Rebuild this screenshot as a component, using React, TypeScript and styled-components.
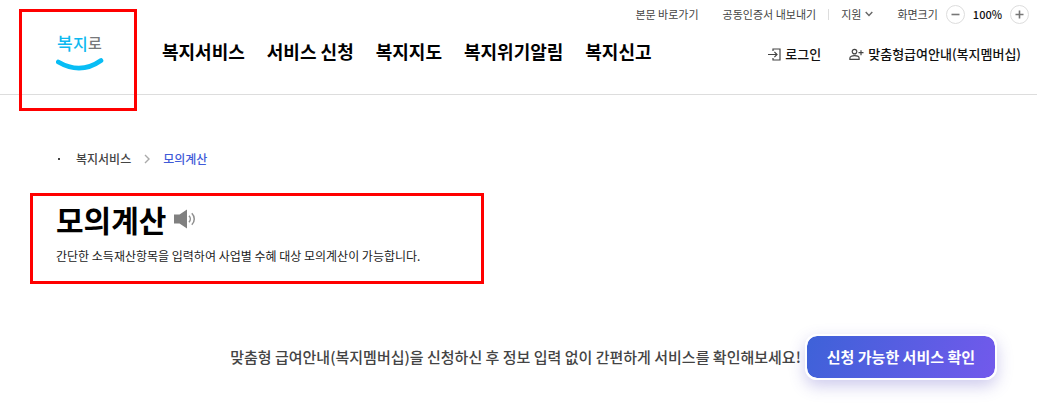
import React from "react";
import styled, { createGlobalStyle } from "styled-components";

const GlobalStyle = createGlobalStyle`
  *, *::before, *::after { box-sizing: border-box; }
  body {
    margin: 0;
    background: #fff;
    color: #222;
    font-family: "Noto Sans CJK KR", "Noto Sans", sans-serif;
    font-size: 12px;
    line-height: 20px;
  }
  a { color: inherit; text-decoration: none; }
  button { font: inherit; cursor: pointer; }
  svg { display: block; flex: none; }
`;

const Header = styled.header`
  padding: 4px 8px 22px 56px;
  border-bottom: 1px solid #ddd;
`;

const HeaderRow = styled.div`
  display: flex;
  align-items: flex-start;
  padding: 6px 8px 0 0;
`;

const LogoLink = styled.a`
  position: relative;
`;

const LogoMark = styled.span`
  position: absolute;
  top: -21px;
  left: -37px;
  width: 118px;
  height: 102px;
  border: 3px solid #f00;
  pointer-events: none;
`;

const MainNav = styled.nav`
  flex: 1;
  padding: 8px 0 0 58px;
`;

const NavList = styled.ul`
  display: flex;
  gap: 22px;
  margin: 0;
  padding: 0;
  list-style: none;
`;

const NavLink = styled.a`
  color: #000;
  font-size: 18px;
  font-weight: 700;
  line-height: 26px;
  white-space: nowrap;
`;

const UtilityBar = styled.div`
  display: flex;
  align-items: center;
  justify-content: flex-end;
  color: #444;
  font-size: 11px;
  white-space: nowrap;
`;

const UtilityLink = styled.a`
  margin-right: 24px;
`;

const SupportButton = styled.button`
  display: flex;
  align-items: center;
  gap: 4px;
  margin: 0 24px 0 12px;
  padding: 0;
  border: 0;
  background: none;
  color: inherit;
`;

const Divider = styled.span`
  width: 1px;
  height: 11px;
  margin-left: 12px;
  background: #ddd;
`;

const ZoomControl = styled.div`
  display: flex;
  align-items: center;
  gap: 8px;
`;

const ZoomButton = styled.button`
  display: grid;
  place-items: center;
  width: 19px;
  height: 19px;
  padding: 0;
  border: 1px solid #ddd;
  border-radius: 50%;
  background: #fff;
  color: #777;
`;

const ZoomValue = styled.output`
  color: #111;
  font-weight: 500;
`;

const AccountBar = styled.div`
  display: flex;
  gap: 28px;
  padding-top: 14px;
`;

const AccountLink = styled.a`
  display: flex;
  align-items: center;
  gap: 4px;
  color: #111;
  font-size: 13px;
  font-weight: 500;
  white-space: nowrap;
`;

const Content = styled.main`
  padding: 54px 40px 32px 30px;
`;

const Breadcrumb = styled.ol`
  display: flex;
  align-items: center;
  gap: 13px;
  margin: 0;
  padding: 0 26px;
  list-style: none;
  color: #444;
  font-weight: 500;
`;

const HomeDot = styled.li`
  width: 2px;
  height: 2px;
  margin: 0 3px 0 2px;
  background: #444;
`;

const Crumb = styled.a<{ $current?: boolean }>`
  color: ${(p) => (p.$current ? "#3f5bd8" : "inherit")};
`;

const TitleBox = styled.section`
  max-width: 454px;
  margin-top: 24px;
  padding: 4px 23px 15px;
  border: 3px solid #f00;
`;

const TitleRow = styled.div`
  display: flex;
  align-items: center;
  gap: 8px;
`;

const Title = styled.h1`
  margin: 0;
  color: #000;
  font-size: 30px;
  font-weight: 700;
  line-height: 38px;
`;

const SoundButton = styled.button`
  padding: 0;
  border: 0;
  background: none;
`;

const Description = styled.p`
  margin: 8px 0 0;
  color: #222;
`;

const Promo = styled.section`
  display: flex;
  align-items: center;
  justify-content: flex-end;
  gap: 4px;
  margin-top: 50px;
`;

const PromoText = styled.p`
  margin: 0;
  color: #444;
  font-size: 15px;
  font-weight: 500;
  white-space: nowrap;
`;

const PromoButton = styled.button`
  padding: 11px 20px;
  border: 2px solid #fff;
  border-radius: 12px;
  background: linear-gradient(110deg, #3d62d8, #7359ec) border-box;
  background-clip: padding-box;
  box-shadow: 0 6px 16px rgba(80, 70, 190, 0.28);
  color: #fff;
  font-size: 15px;
  font-weight: 700;
  white-space: nowrap;
`;

const Logo = () => (
  <svg width="48" height="42" viewBox="0 0 48 42" role="img" aria-label="복지로">
    <g fontFamily='"Noto Sans CJK KR", sans-serif' fontWeight="500">
      <text x="1" y="20" fontSize="17" fill="#0cb9f0">복</text>
      <text x="17" y="20" fontSize="16" fill="#0cb9f0">지</text>
      <text x="32" y="19" fontSize="15" fill="#77787b">로</text>
    </g>
    <path d="M2.3 32 Q24.5 45 45 30.5" fill="none" stroke="#08bdf5" strokeWidth="4.6" strokeLinecap="round" />
  </svg>
);

const ChevronDown = () => (
  <svg width="8" height="6" viewBox="0 0 8 6" fill="none" stroke="#666" strokeWidth="1.4" aria-hidden="true">
    <path d="M.7 1 4 4.4 7.3 1" />
  </svg>
);

const ChevronRight = () => (
  <svg width="6" height="10" viewBox="0 0 6 10" fill="none" stroke="#aaa" strokeWidth="1.4" aria-hidden="true">
    <path d="M1 1l4 4-4 4" />
  </svg>
);

const LoginIcon = () => (
  <svg width="13" height="13" viewBox="0 0 13 13" fill="none" stroke="#444" strokeWidth="1.2" aria-hidden="true">
    <path d="M5 3V1h7v11H5v-2M0 6.5h9M6.4 3.9 9 6.5 6.4 9.1" />
  </svg>
);

const MemberIcon = () => (
  <svg width="15" height="13" viewBox="0 0 15 13" fill="none" stroke="#444" strokeWidth="1.2" aria-hidden="true">
    <circle cx="5.5" cy="3.6" r="2.3" />
    <path d="M.9 11.4V10c0-1.5 2.2-2.4 4.6-2.4s4.6.9 4.6 2.4v1.4zM12 2.2v5M9.5 4.7h5" />
  </svg>
);

const SoundIcon = () => (
  <svg width="22" height="20" viewBox="0 0 22 20" aria-hidden="true">
    <path d="M0 5.5h5.5L13 .6v18.8l-7.5-4.9H0z" fill="#808080" />
    <path d="M15 6.8c1.7 1.8 1.7 4.6 0 6.4M17.8 4.2c3.3 3.4 3.3 8.2 0 11.6" fill="none" stroke="#909090" strokeWidth="1.5" />
  </svg>
);

const PlusMinus = ({ plus }: { plus?: boolean }) => (
  <svg width="9" height="9" viewBox="0 0 9 9" stroke="currentColor" strokeWidth="1.6" aria-hidden="true">
    <path d={plus ? "M.5 4.5h8M4.5.5v8" : "M.5 4.5h8"} />
  </svg>
);

const menu = ["복지서비스", "서비스 신청", "복지지도", "복지위기알림", "복지신고"];

export default function App() {
  return (
    <>
      <GlobalStyle />
      <Header>
        <UtilityBar>
          <UtilityLink href="#content">본문 바로가기</UtilityLink>
          <a href="#">공동인증서 내보내기</a>
          <Divider />
          <SupportButton type="button">
            지원 <ChevronDown />
          </SupportButton>
          <ZoomControl>
            <span>화면크기</span>
            <ZoomButton type="button" aria-label="축소">
              <PlusMinus />
            </ZoomButton>
            <ZoomValue>100%</ZoomValue>
            <ZoomButton type="button" aria-label="확대">
              <PlusMinus plus />
            </ZoomButton>
          </ZoomControl>
        </UtilityBar>
        <HeaderRow>
          <LogoLink href="#">
            <Logo />
            <LogoMark />
          </LogoLink>
          <MainNav>
            <NavList>
              {menu.map((label) => (
                <li key={label}>
                  <NavLink href="#">{label}</NavLink>
                </li>
              ))}
            </NavList>
          </MainNav>
          <AccountBar>
            <AccountLink href="#">
              <LoginIcon />
              로그인
            </AccountLink>
            <AccountLink href="#">
              <MemberIcon />
              맞춤형급여안내(복지멤버십)
            </AccountLink>
          </AccountBar>
        </HeaderRow>
      </Header>
      <Content id="content">
        <nav>
          <Breadcrumb>
            <HomeDot />
            <li>
              <Crumb href="#">복지서비스</Crumb>
            </li>
            <li>
              <ChevronRight />
            </li>
            <li>
              <Crumb href="#" $current>모의계산</Crumb>
            </li>
          </Breadcrumb>
        </nav>
        <TitleBox>
          <TitleRow>
            <Title>모의계산</Title>
            <SoundButton type="button" aria-label="음성 듣기">
              <SoundIcon />
            </SoundButton>
          </TitleRow>
          <Description>간단한 소득재산항목을 입력하여 사업별 수혜 대상 모의계산이 가능합니다.</Description>
        </TitleBox>
        <Promo>
          <PromoText>맞춤형 급여안내(복지멤버십)을 신청하신 후 정보 입력 없이 간편하게 서비스를 확인해보세요!</PromoText>
          <PromoButton type="button">신청 가능한 서비스 확인</PromoButton>
        </Promo>
      </Content>
    </>
  );
}
